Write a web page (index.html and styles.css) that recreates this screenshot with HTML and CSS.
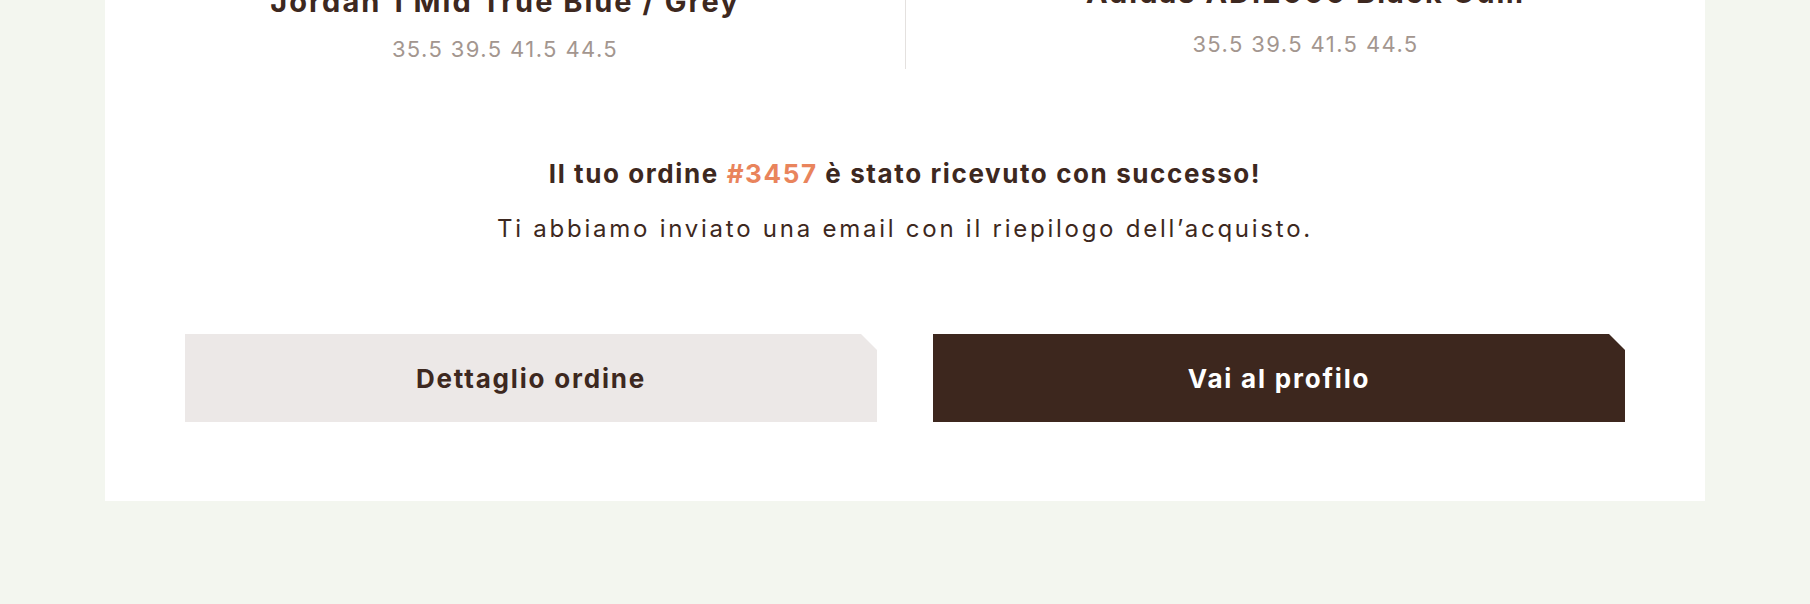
FILE: index.html
```html
<!DOCTYPE html>
<html lang="it">
<head>
<meta charset="utf-8">
<title>Ordine ricevuto</title>
<link rel="stylesheet" href="styles.css">
</head>
<body>
<main class="card">
  <section class="products">
    <div class="product product-left">
      <h3 class="product-title">Jordan 1 Mid True Blue / Grey</h3>
      <p class="product-sizes">35.5 39.5 41.5 44.5</p>
    </div>
    <div class="product product-right">
      <h3 class="product-title">Adidas ADI2000 Black Gum</h3>
      <p class="product-sizes">35.5 39.5 41.5 44.5</p>
    </div>
  </section>
  <section class="message">
    <h2 class="message-title">Il tuo ordine <span class="order-num">#3457</span> è stato ricevuto con successo!</h2>
    <p class="message-text">Ti abbiamo inviato una email con il riepilogo dell’acquisto.</p>
  </section>
  <section class="actions">
    <a class="btn btn-light" href="#">Dettaglio ordine</a>
    <a class="btn btn-dark" href="#">Vai al profilo</a>
  </section>
</main>
</body>
</html>
```
FILE: styles.css
```css
* { box-sizing: border-box; }
html, body { margin: 0; padding: 0; }
body {
  background: #f3f6ef;
  font-family: "Inter", "Noto Sans", sans-serif;
  color: #3d2820;
  height: 604px;
  overflow: hidden;
}
.card {
  width: 1600px;
  margin: 0 auto;
  background: #ffffff;
  padding: 0 80px 79px;
}
.products {
  display: grid;
  grid-template-columns: 1fr 1fr;
  margin: 0 -80px;
  height: 69px;
}
.product {
  display: flex;
  flex-direction: column;
  justify-content: flex-end;
  align-items: center;
  height: 69px;
}
.product-right { border-left: 1px solid #e4e1df; }
.product-title {
  margin: 0;
  font-size: 29px;
  line-height: 34px;
  font-weight: 700;
  letter-spacing: 2px;
  white-space: nowrap;
}
.product-sizes {
  margin: 0;
  font-size: 22px;
  line-height: 28px;
  color: #a3968f;
  letter-spacing: 1.4px;
}
.product-left .product-sizes { margin-top: 16px; }
.product-left { padding-bottom: 6px; }
.product-right .product-sizes { margin-top: 20px; }
.product-right { padding-bottom: 11px; }

.message {
  text-align: center;
  padding-top: 89px;
}
.message-title {
  margin: 0;
  font-size: 26px;
  line-height: 32px;
  font-weight: 700;
  letter-spacing: 1.6px;
}
.order-num { color: #e9845c; }
.message-text {
  margin: 23px 0 0;
  font-size: 24px;
  line-height: 32px;
  letter-spacing: 2.75px;
}
.actions {
  display: grid;
  grid-template-columns: 1fr 1fr;
  column-gap: 56px;
  margin-top: 89px;
}
.btn {
  display: flex;
  align-items: center;
  justify-content: center;
  height: 88px;
  font-size: 26px;
  font-weight: 700;
  letter-spacing: 1.8px;
  text-decoration: none;
  clip-path: polygon(0 0, calc(100% - 16px) 0, 100% 16px, 100% 100%, 0 100%);
}
.btn-light { background: #ece8e7; color: #3d2820; }
.btn-dark { background: #3d271e; color: #ffffff; }
```
